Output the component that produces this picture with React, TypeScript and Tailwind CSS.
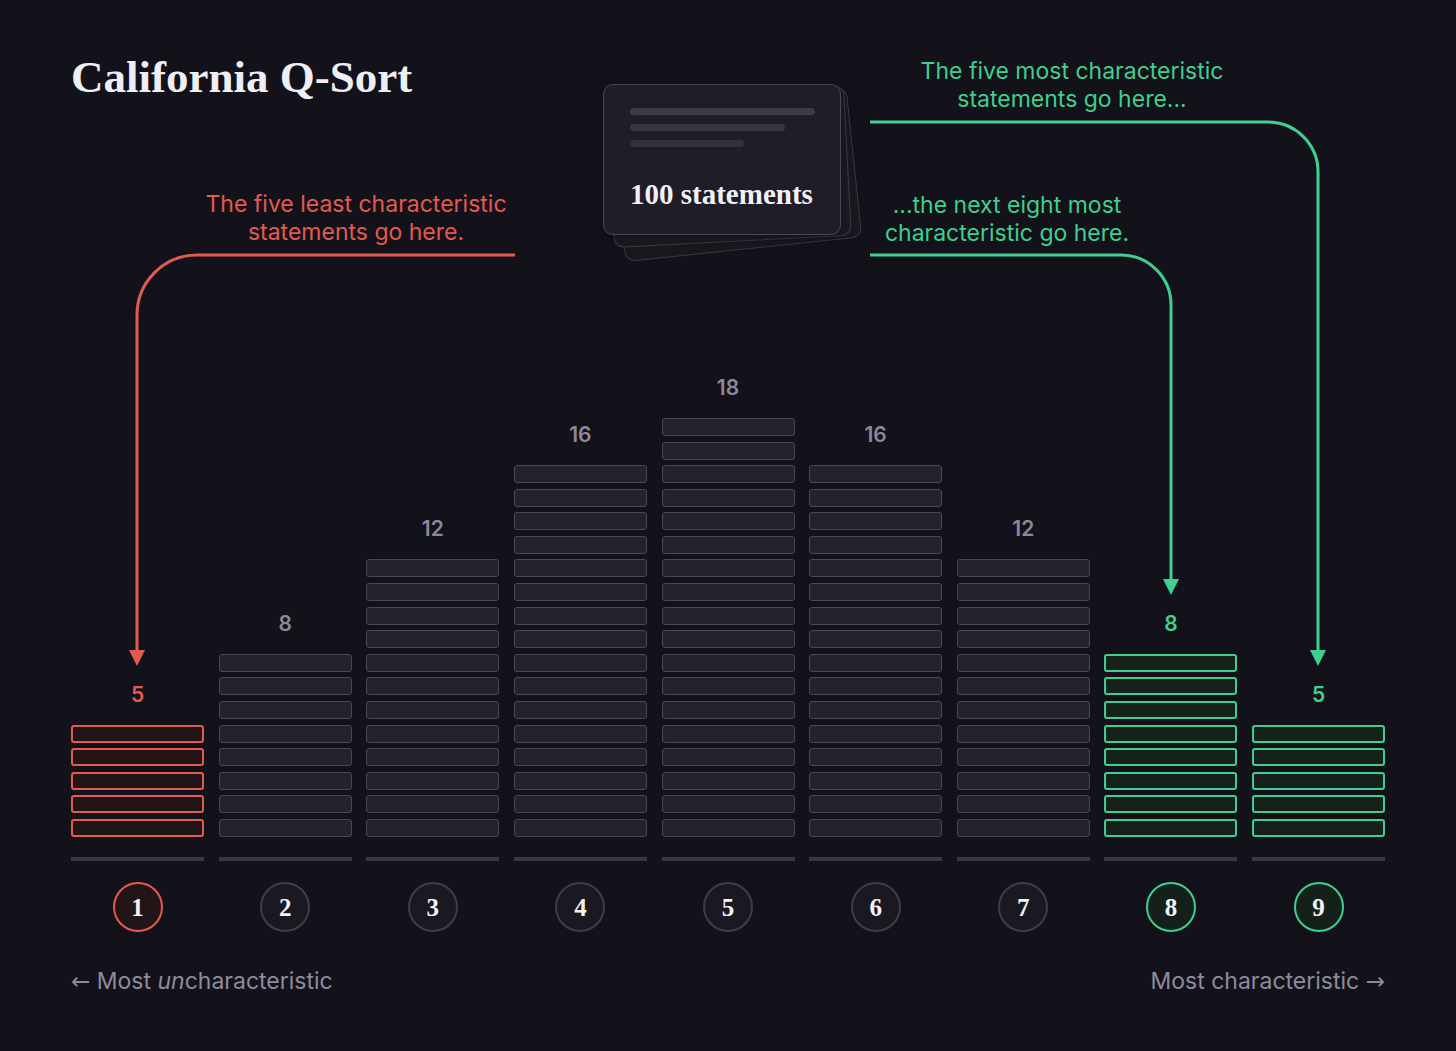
import React from 'react';

type Tone = 'red' | 'gray' | 'green';

interface Bin {
  rank: number;
  count: number;
  tone: Tone;
}

const bins: Bin[] = [
  { rank: 1, count: 5, tone: 'red' },
  { rank: 2, count: 8, tone: 'gray' },
  { rank: 3, count: 12, tone: 'gray' },
  { rank: 4, count: 16, tone: 'gray' },
  { rank: 5, count: 18, tone: 'gray' },
  { rank: 6, count: 16, tone: 'gray' },
  { rank: 7, count: 12, tone: 'gray' },
  { rank: 8, count: 8, tone: 'green' },
  { rank: 9, count: 5, tone: 'green' },
];

const slotClass: Record<Tone, string> = {
  red: 'border-2 border-[#e35a50] bg-[#211517]',
  gray: 'border-[1.5px] border-[#4a4852] bg-[#24222c]',
  green: 'border-2 border-[#3fcf8e] bg-[#15211b]',
};

const labelClass: Record<Tone, string> = {
  red: 'text-[#e35a50]',
  gray: 'text-[#8b8898]',
  green: 'text-[#3fcf8e]',
};

const circleClass: Record<Tone, string> = {
  red: 'border-2 border-[#e35a50] bg-[#221517]',
  gray: 'border-2 border-[#3f3d48] bg-[#1a1922]',
  green: 'border-2 border-[#3fcf8e] bg-[#14211a]',
};

const serif = "font-['Liberation_Serif','Times_New_Roman',serif]";
const sans = "font-['Inter','Noto_Sans',sans-serif]";
const arrowFont = "font-['DejaVu_Sans',sans-serif]";

const CardStack: React.FC = () => (
  <div className="absolute left-[603px] top-[84px] w-[238px] h-[151px]">
    <div className="absolute inset-0 rounded-[10px] border-[1.5px] border-[#3a3843] bg-[#19181f] translate-x-[14px] translate-y-[15px] -rotate-6" />
    <div className="absolute inset-0 rounded-[10px] border-[1.5px] border-[#3e3c47] bg-[#1c1b23] translate-x-[7px] translate-y-[7px] -rotate-3" />
    <div className="absolute inset-0 rounded-[10px] border-[1.5px] border-[#4a4856] bg-[#1f1d27] shadow-[0_4px_12px_rgba(0,0,0,0.35)] px-[26px] pt-[23px]">
      <div className="flex flex-col gap-[9px]">
        <div className="h-[7px] w-[185px] rounded-full bg-[#3d3b47]" />
        <div className="h-[7px] w-[155px] rounded-full bg-[#383641]" />
        <div className="h-[7px] w-[114px] rounded-full bg-[#32303b]" />
      </div>
      <div className={`${serif} mt-[33px] text-[29px] font-bold leading-none text-[#f1f0f6] whitespace-nowrap`}>
        100 statements
      </div>
    </div>
  </div>
);

const Arrows: React.FC = () => (
  <svg className="absolute inset-0 pointer-events-none" width="1456" height="1051" viewBox="0 0 1456 1051" fill="none">
    <path d="M515 255 H197 A60 60 0 0 0 137 315 V652" stroke="#e35a50" strokeWidth="3" />
    <polygon points="129,650 145,650 137,666" fill="#e35a50" />
    <path d="M870 122 H1268 A50 50 0 0 1 1318 172 V652" stroke="#3fcf8e" strokeWidth="3" />
    <polygon points="1310,650 1326,650 1318,666" fill="#3fcf8e" />
    <path d="M870 255 H1121 A50 50 0 0 1 1171 305 V581" stroke="#3fcf8e" strokeWidth="3" />
    <polygon points="1163,579 1179,579 1171,595" fill="#3fcf8e" />
  </svg>
);

export default function App() {
  return (
    <div className={`${sans} relative w-[1456px] h-[1051px] overflow-hidden bg-[#13121b] px-[71px] pb-[56px] flex flex-col`}>
      <h1 className={`${serif} mt-[55px] text-[45px] font-bold leading-none text-[#efeef5]`}>
        California Q-Sort
      </h1>

      <div className="flex-1" />

      <div className="grid grid-cols-9 gap-x-[14.625px] items-end">
        {bins.map((bin) => (
          <div key={bin.rank} className="flex flex-col">
            <div className={`text-center text-[21px] font-semibold leading-[24px] mb-[18px] ${labelClass[bin.tone]}`}>
              {bin.count}
            </div>
            <div className="flex flex-col gap-[5.6px]">
              {Array.from({ length: bin.count }).map((_, i) => (
                <div key={i} className={`h-[18px] rounded-[3px] ${slotClass[bin.tone]}`} />
              ))}
            </div>
          </div>
        ))}
      </div>

      <div className="grid grid-cols-9 gap-x-[14.625px] mt-[20px]">
        {bins.map((bin) => (
          <div key={bin.rank} className="h-[4px] bg-[#393743]" />
        ))}
      </div>

      <div className="grid grid-cols-9 gap-x-[14.625px] mt-[21px]">
        {bins.map((bin) => (
          <div key={bin.rank} className="flex justify-center">
            <div className={`w-[50px] h-[50px] rounded-full flex items-center justify-center ${circleClass[bin.tone]}`}>
              <span className={`${serif} text-[25px] font-bold leading-none text-[#f4f3f8]`}>{bin.rank}</span>
            </div>
          </div>
        ))}
      </div>

      <div className="mt-[35px] flex justify-between text-[23px] leading-[28px] text-[#8e8b9d]">
        <span>
          <span className={arrowFont}>←</span> Most <i>un</i>characteristic
        </span>
        <span>
          Most characteristic <span className={arrowFont}>→</span>
        </span>
      </div>

      <CardStack />

      <div className="absolute left-[156px] top-[190px] w-[400px] text-center text-[23px] leading-[28px] text-[#e35a50]">
        The five least characteristic
        <br />
        statements go here.
      </div>
      <div className="absolute left-[872px] top-[57px] w-[400px] text-center text-[23px] leading-[28px] text-[#3fcf8e]">
        The five most characteristic
        <br />
        statements go here...
      </div>
      <div className="absolute left-[807px] top-[191px] w-[400px] text-center text-[23px] leading-[28px] text-[#3fcf8e]">
        ...the next eight most
        <br />
        characteristic go here.
      </div>

      <Arrows />
    </div>
  );
}
